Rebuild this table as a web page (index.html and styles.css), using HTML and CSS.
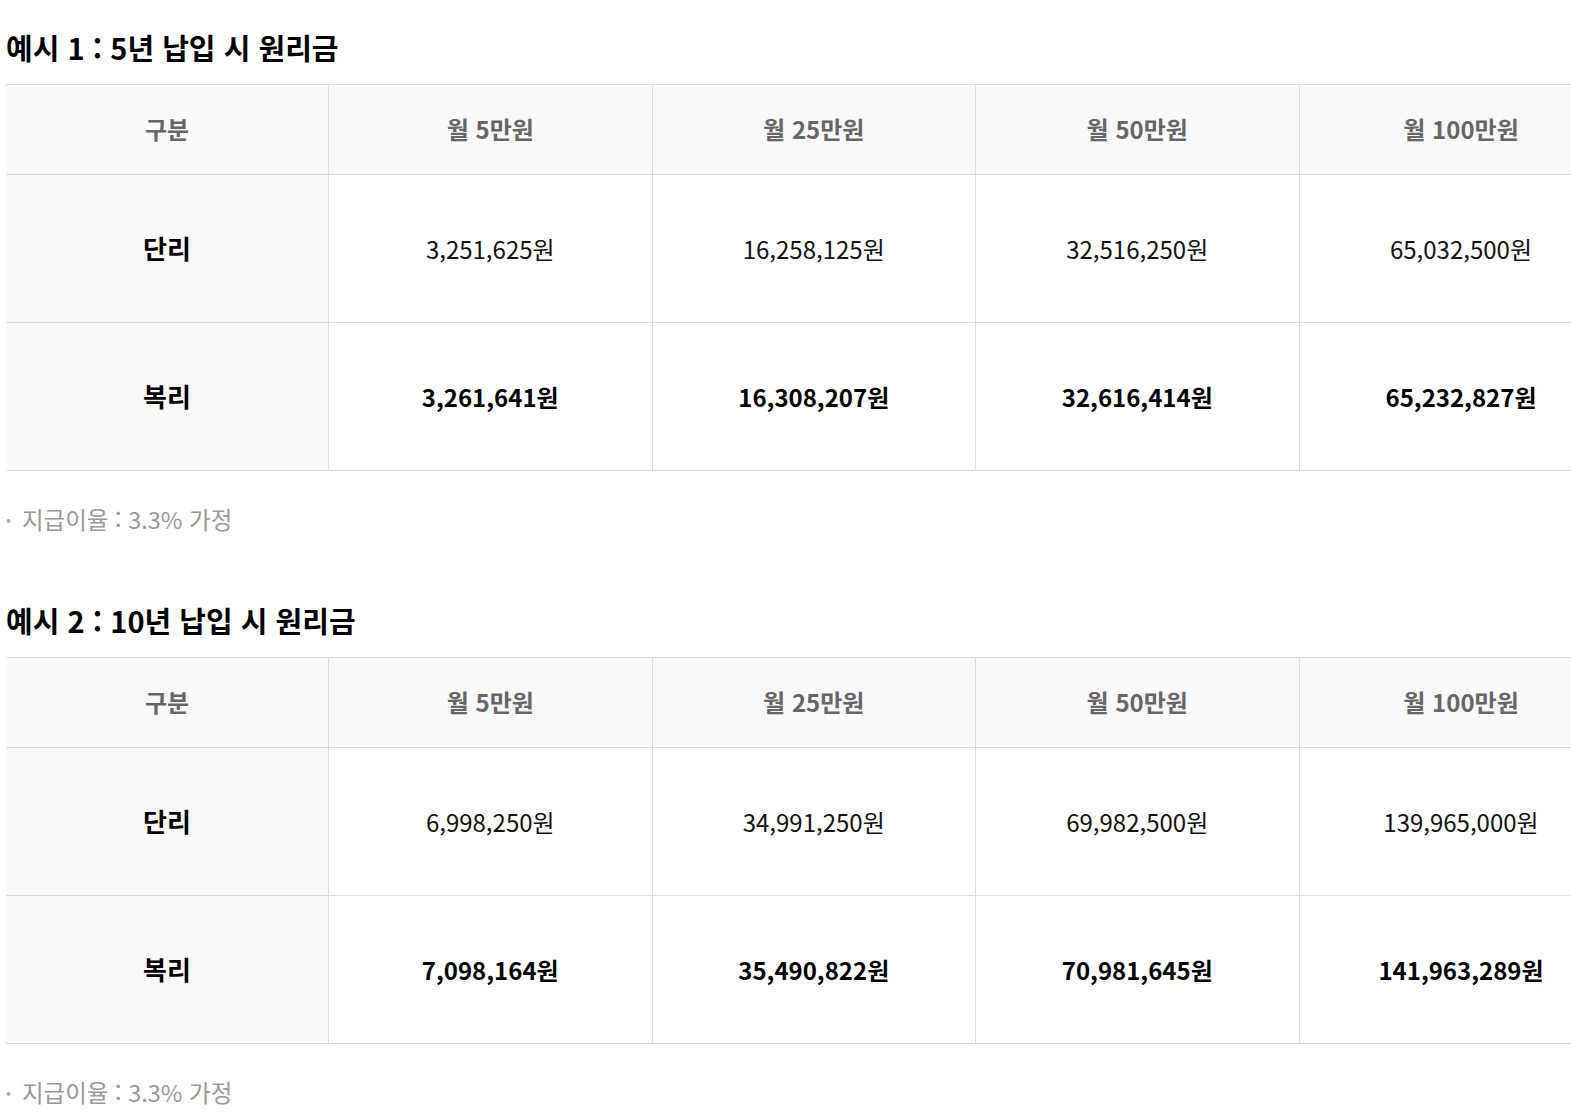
FILE: index.html
```html
<!DOCTYPE html>
<html lang="ko">
<head>
<meta charset="utf-8">
<title>원리금 예시</title>
<link rel="stylesheet" href="styles.css">
</head>
<body>
<div class="page">
  <section class="example">
    <h3 class="example-title">예시 1 : 5년 납입 시 원리금</h3>
    <div class="table-wrap">
      <table class="amount-table">
        <thead>
          <tr>
            <th class="col-label">구분</th>
            <th>월 5만원</th>
            <th>월 25만원</th>
            <th>월 50만원</th>
            <th>월 100만원</th>
          </tr>
        </thead>
        <tbody>
          <tr>
            <th class="row-head">단리</th>
            <td>3,251,625원</td>
            <td>16,258,125원</td>
            <td>32,516,250원</td>
            <td>65,032,500원</td>
          </tr>
          <tr class="strong-row">
            <th class="row-head">복리</th>
            <td>3,261,641원</td>
            <td>16,308,207원</td>
            <td>32,616,414원</td>
            <td>65,232,827원</td>
          </tr>
        </tbody>
      </table>
    </div>
    <p class="note"><span class="dot">•</span>지급이율 : 3.3% 가정</p>
  </section>

  <section class="example">
    <h3 class="example-title">예시 2 : 10년 납입 시 원리금</h3>
    <div class="table-wrap">
      <table class="amount-table">
        <thead>
          <tr>
            <th class="col-label">구분</th>
            <th>월 5만원</th>
            <th>월 25만원</th>
            <th>월 50만원</th>
            <th>월 100만원</th>
          </tr>
        </thead>
        <tbody>
          <tr>
            <th class="row-head">단리</th>
            <td>6,998,250원</td>
            <td>34,991,250원</td>
            <td>69,982,500원</td>
            <td>139,965,000원</td>
          </tr>
          <tr class="strong-row">
            <th class="row-head">복리</th>
            <td>7,098,164원</td>
            <td>35,490,822원</td>
            <td>70,981,645원</td>
            <td>141,963,289원</td>
          </tr>
        </tbody>
      </table>
    </div>
    <p class="note"><span class="dot">•</span>지급이율 : 3.3% 가정</p>
  </section>
</div>
</body>
</html>
```

FILE: styles.css
```css
* { box-sizing: border-box; }

html, body {
  margin: 0;
  padding: 0;
  background: #fff;
  overflow: hidden;
}

body {
  font-family: "Noto Sans CJK KR", "Noto Sans", sans-serif;
  color: #111;
}

.page {
  padding: 0 0 0 6px;
}

.example {
  margin-bottom: 64px;
}

.example-title {
  margin: 27px 0 17px;
  font-size: 29px;
  line-height: 40px;
  font-weight: 700;
  color: #000;
}

.example + .example .example-title {
  margin-top: 0;
}

.table-wrap {
  overflow: hidden;
  width: 100%;
}

.amount-table {
  width: 1616.5px;
  border-collapse: collapse;
  table-layout: fixed;
  border-top: 1px solid #dcdcdc;
}

.amount-table th,
.amount-table td {
  width: 323.5px;
  border-bottom: 1px solid #dcdcdc;
  border-left: 1px solid #dcdcdc;
  text-align: center;
  vertical-align: middle;
  padding: 0;
}

.amount-table .col-label {
  width: 322.5px;
}

.amount-table tr > :first-child {
  border-left: none;
}

.amount-table thead th {
  height: 90px;
  padding-bottom: 3px;
  background: #f9f9f9;
  color: #666;
  font-size: 24px;
  font-weight: 700;
}

.amount-table tbody th,
.amount-table tbody td {
  height: 148px;
  font-size: 24px;
}

.amount-table td {
  font-weight: 400;
  color: #111;
}

.amount-table .row-head {
  background: #f9f9f9;
  color: #000;
  font-weight: 700;
  font-size: 26px;
  padding-bottom: 2px;
}

.strong-row td {
  font-weight: 700;
  color: #000;
}

.note {
  margin: 31px 0 0;
  font-size: 23.5px;
  line-height: 34px;
  color: #999;
}

.dot {
  display: inline-block;
  width: 16px;
  font-size: 14px;
  vertical-align: top;
  line-height: 34px;
  color: #aaa;
}
```
